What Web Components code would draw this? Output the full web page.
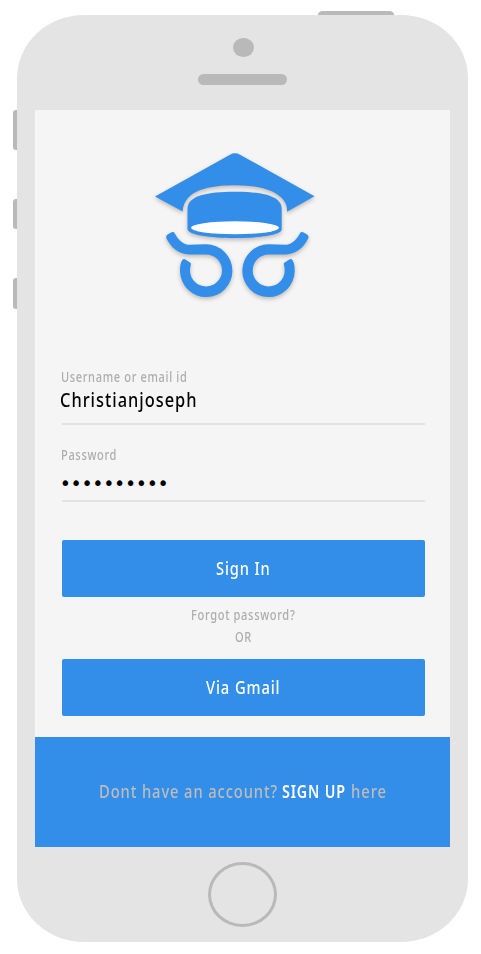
<!DOCTYPE html>
<html lang="en">
<head>
<meta charset="utf-8">
<title>Sign in</title>
<style>
body{margin:0;background:#fff;font-family:"Noto Sans","Liberation Sans",sans-serif}
</style>
</head>
<body>
<phone-frame>
  <login-screen>
    <cap-logo></cap-logo>
    <form-field label="Username or email id" label-width="126.5"><fit-text w="137.5">Christianjoseph</fit-text></form-field>
    <form-field class="pw" label="Password" label-width="56"><password-dots>••••••••••</password-dots></form-field>
    <action-button><fit-text w="54.5">Sign In</fit-text></action-button>
    <div slot="between"><fit-text w="104.5">Forgot password?</fit-text><fit-text w="17">OR</fit-text></div>
    <action-button slot="second"><fit-text w="74.5">Via Gmail</fit-text></action-button>
    <signup-bar slot="bar"></signup-bar>
  </login-screen>
</phone-frame>
<script>
const define = (name, html, setup) => customElements.define(name, class extends HTMLElement {
  connectedCallback() {
    if (this.shadowRoot) return;
    const t = document.createElement('template');
    t.innerHTML = html;
    this.attachShadow({mode: 'open'}).append(t.content.cloneNode(true));
    if (setup) setup(this, this.shadowRoot);
  }
});

define('phone-frame', `<style>
:host{display:grid;grid-template:14.5px 927.2px/17.3px 450.4px;width:481px;height:954px;overflow:hidden}
.power{grid-column:2;height:3.5px;width:76px;margin:11px 0 0 300.7px;background:#b9b9b9;border-radius:5px 5px 0 0/3.5px 3.5px 0 0}
.keys{grid-column:1;grid-row:2;padding:95.2px 0 0 13px}
.keys i{display:block;background:#b9b9b9;border-radius:3px 0 0 3px;height:30.6px;margin-bottom:49px}
.keys i:first-child{height:40.3px;margin-bottom:48.7px}
.body{grid-column:2;grid-row:2;background:#e4e4e4;border-radius:67px/63px;display:flex;flex-direction:column}
.top{height:95px;display:flex;flex-direction:column;align-items:center;padding:23.1px 0 0 .6px;box-sizing:border-box;flex:none}
.cam{width:21px;height:19.6px;border-radius:50%;background:#b9b9b9;margin-left:1.2px}
.spk{width:89px;height:11px;border-radius:6px;background:#b9b9b9;margin-top:16.8px}
.home{width:69px;height:65px;box-sizing:border-box;border:3px solid #b9b9b9;border-radius:50%;margin:15.3px 0 0 190.5px}
</style><div class="power"></div><div class="keys"><i></i><i></i><i></i></div>
<div class="body"><div class="top"><div class="cam"></div><div class="spk"></div></div><slot></slot><div class="home"></div></div>`);

define('login-screen', `<style>
:host{display:flex;flex-direction:column;flex:none;box-sizing:border-box;width:415px;height:737.5px;margin-left:17.7px;background:#f5f5f5;padding-top:31px}
.main{height:596.5px;display:flex;flex-direction:column;padding:0 25px 0 27px}
::slotted(div){height:62px;box-sizing:border-box;padding-top:7px;color:#adadad;font-size:14px;font-weight:500;line-height:22px;display:flex;flex-direction:column;align-items:center}
</style><div class="main"><slot></slot><slot name="between"></slot><slot name="second"></slot></div><slot name="bar"></slot>`);

define('cap-logo', `<style>:host{display:block;height:222px;margin-left:-27px}svg{display:block;filter:drop-shadow(0 2.5px 2px rgba(70,55,45,.32))}</style>
<svg width="415" height="200" viewBox="35 141 415 200" fill="#328ee8">
<path d="M155 196.5 230 154.7Q235 151.8 240 154.7L314.5 196.2 287 211.8Q287.6 204 282 198.2C272 188 254 185.3 235 185.3S197 188 188 198Q182.7 204 182.7 211.5Z"/>
<path d="M187.5 228V209C187.5 195.5 208 191.8 234.6 191.8S281.7 195.5 281.7 209V229.5C281.7 235 258 238 234.6 238S187.5 235 187.5 229Z"/>
<path id="curl" d="M166.3 238Q165.6 235.6 168 234.3L171.6 232.3Q173.8 231.5 174.8 233.4C179 241 184 244.8 190 244.8Q197 244.3 206 244.3A26.2 26.4 0 1 1 180 271C180 266 180.6 263 182 260.5Q183.3 258.4 185.4 259.5L190.3 262.8Q191.4 263.6 190.7 265Q190 267.5 190 271A16 16 0 1 0 206 254.4H189C178.5 254.4 170.5 247 166.3 238Z"/>
<use href="#curl" transform="translate(474.7 0) scale(-1 1)"/>
<ellipse cx="235" cy="227.8" rx="44" ry="6.5" fill="#fff"/>
</svg>`);

define('form-field', `<style>
:host{display:block;height:77.5px}
:host(.pw){margin-bottom:14.5px;height:85px}
.l{font-size:14px;font-weight:500;line-height:18px;color:#adadad;padding-top:5.5px;margin-left:-1.2px}
.v{font-size:19.3px;line-height:28.5px;height:38.5px;color:#000;font-weight:500;border-bottom:2px solid #e3e3e3;box-sizing:border-box}
::slotted(fit-text){margin-left:-1.5px}
</style><div class="l"></div><div class="v"><slot></slot></div>`, (el, root) => {
  const f = document.createElement('fit-text');
  f.setAttribute('w', el.getAttribute('label-width'));
  f.textContent = el.getAttribute('label');
  root.querySelector('.l').append(f);
});

define('password-dots', `<style>
:host{display:block;font:19px/38px "DejaVu Sans",sans-serif;letter-spacing:-.33px;margin-left:-2.3px}
</style><slot></slot>`);

define('action-button', `<style>
:host{display:flex;justify-content:center;flex:none;height:57.3px;line-height:56px;background:#328ee8;border-radius:2px;color:#fff;font-size:17.6px;font-weight:500}
</style><slot></slot>`);

define('signup-bar', `<style>
:host{display:flex;height:110px;box-sizing:border-box;background:#328ee8;color:#bfbcb9;font-size:17.2px;font-weight:500;line-height:110px;padding-left:64.5px}
.s{color:#fff;font-weight:600;margin:0 5px 0 4px}
</style><fit-text w="179">Dont have an account?</fit-text><fit-text class="s" w="64">SIGN UP</fit-text><fit-text w="36">here</fit-text>`);

/* Text set in a condensed measure: w is the width of the run in pixels.
   Defined last, so that the run is measured in its final font. */
define('fit-text', `<style>
:host{display:block;white-space:nowrap;letter-spacing:.06em}
span{display:inline-block;transform-origin:0 50%}
</style><span><slot></slot></span>`, (el, root) => {
  const s = root.querySelector('span'), w = +el.getAttribute('w');
  el.style.width = w + 'px';
  s.style.transform = 'scaleX(' + w / s.getBoundingClientRect().width + ')';
});
</script>
</body>
</html>
